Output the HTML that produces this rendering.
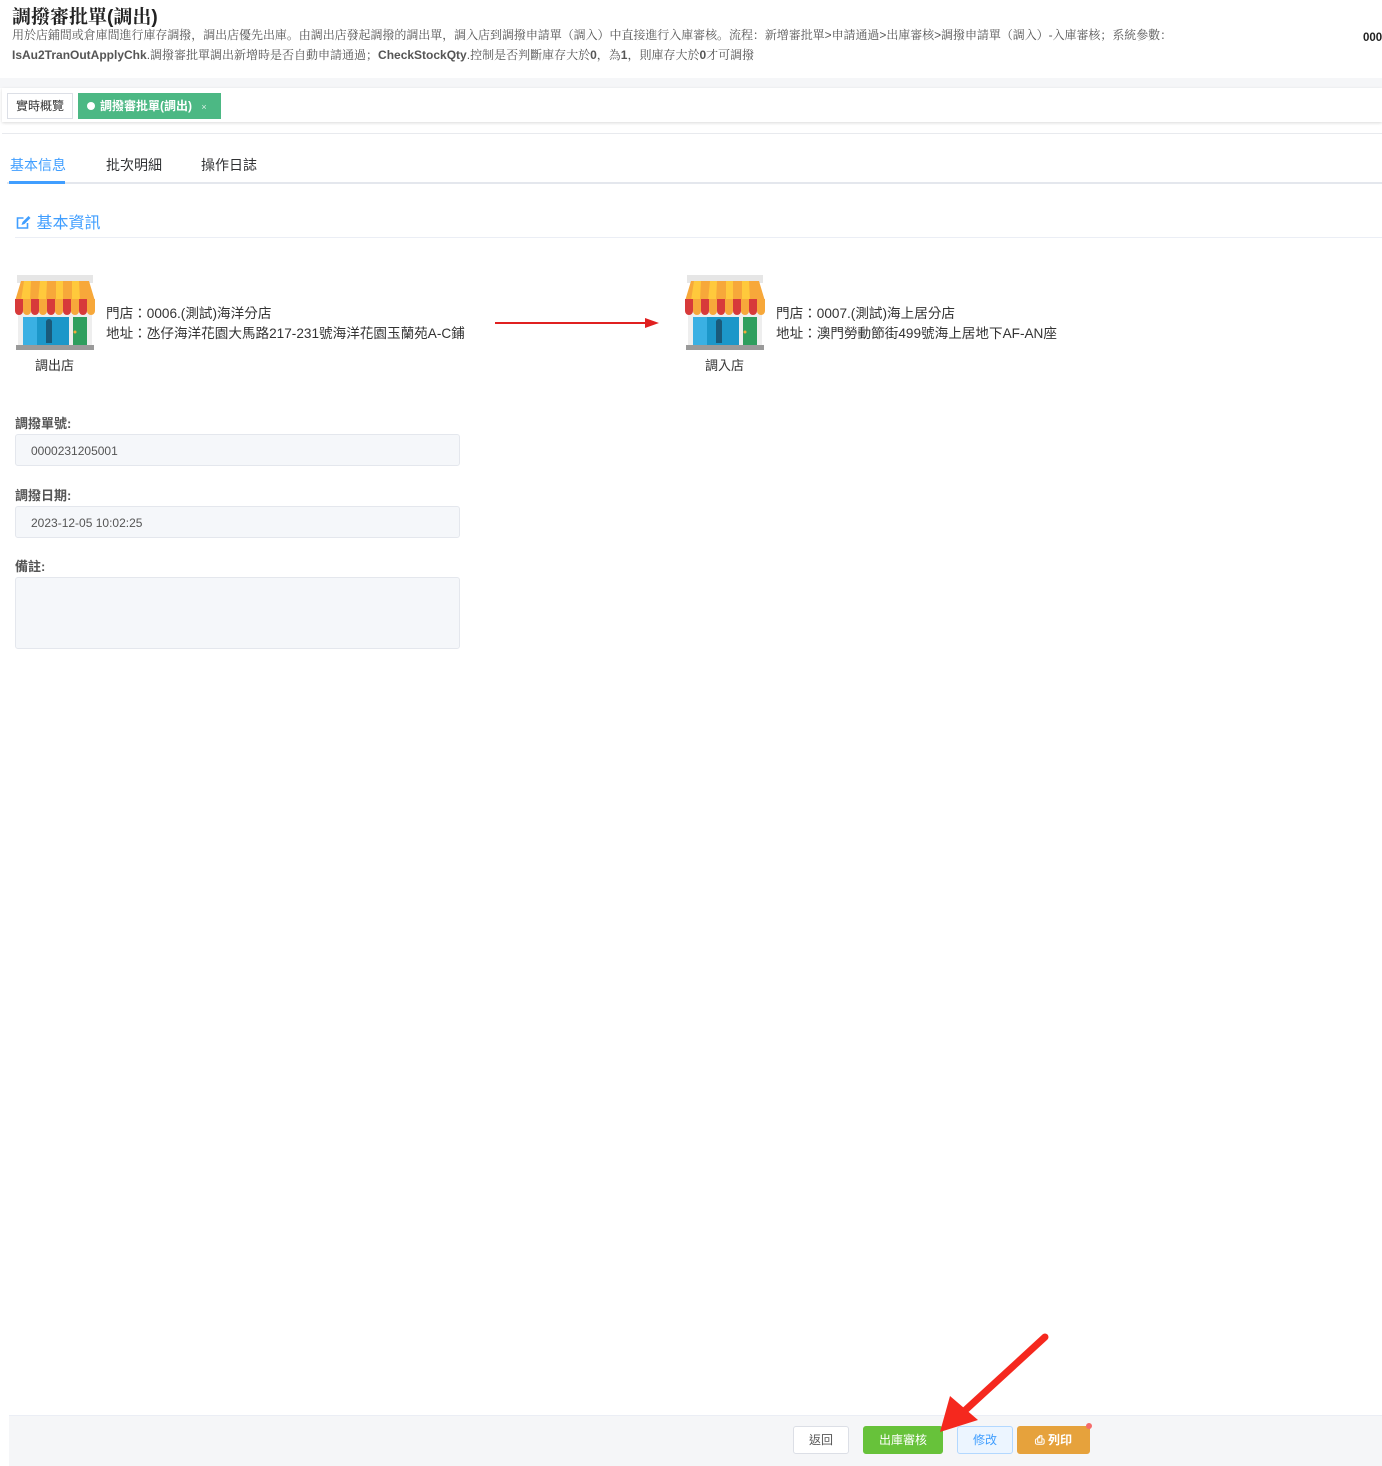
<!DOCTYPE html><html><head><meta charset="utf-8"><style>
*{margin:0;padding:0;box-sizing:border-box}
body{width:1382px;height:1466px;background:#fff;font-family:"Liberation Sans","Noto Sans CJK TC",sans-serif;color:#333;position:relative;overflow:hidden}
.a{position:absolute;white-space:nowrap}
.inp{position:absolute;left:15px;width:445px;height:32px;background:#f5f7fa;border:1px solid #e4e7ed;border-radius:3px;font-size:12px;color:#555;padding:9px 15px}
.btn{position:absolute;top:1426px;height:28px;font-size:12px;border-radius:3px;text-align:center;line-height:26px;border:1px solid}
</style></head><body>
<div class="a" style="left:12px;top:2px;font-size:19px;font-weight:bold;color:#222;font-family:'Liberation Sans','Noto Serif CJK SC',serif">調撥審批單(調出)</div>
<div class="a" style="left:12px;top:26px;font-size:12px;color:#555;font-family:'Liberation Sans','Noto Serif CJK SC',serif;letter-spacing:-0.05px">用於店鋪間或倉庫間進行庫存調撥，調出店優先出庫。由調出店發起調撥的調出單，調入店到調撥申請單（調入）中直接進行入庫審核。流程：新增審批單&gt;申請通過&gt;出庫審核&gt;調撥申請單（調入）-入庫審核；系統參數：</div>
<div class="a" style="left:12px;top:46px;font-size:12px;color:#555;font-family:'Liberation Sans','Noto Serif CJK SC',serif"><b>IsAu2TranOutApplyChk</b>.調撥審批單調出新增時是否自動申請通過；<b>CheckStockQty</b>.控制是否判斷庫存大於<b>0</b>，為<b>1</b>，則庫存大於<b>0</b>才可調撥</div>
<div class="a" style="left:1363px;top:32px;font-size:11.5px;font-weight:bold;color:#222">000</div>
<div class="a" style="left:0;top:78px;width:1382px;height:10px;background:#f5f6f8"></div>
<div class="a" style="left:2px;top:88px;width:1380px;height:34px;background:#fff;box-shadow:0 1px 3px rgba(0,0,0,.15)"></div>
<div class="a" style="left:2px;top:133px;width:1380px;height:1px;background:#e8eaee"></div>
<div class="a" style="left:7px;top:93px;width:66px;height:26px;border:1px solid #dcdfe6;font-size:12px;line-height:24px;text-align:center;color:#333;background:#fff">實時概覽</div>
<div class="a" style="left:78px;top:93px;width:143px;height:26px;background:#4cb884;color:#fff;font-size:12px;line-height:26px;padding-left:9px;font-weight:bold"><span style="display:inline-block;width:8px;height:8px;border-radius:50%;background:#fff;margin-right:5px"></span>調撥審批單(調出) <span style="font-size:9px;margin-left:6px;opacity:.8;font-weight:normal">×</span></div>
<div class="a" style="left:10px;top:155px;font-size:14px;color:#409eff">基本信息</div>
<div class="a" style="left:106px;top:155px;font-size:14px;color:#303133">批次明細</div>
<div class="a" style="left:201px;top:155px;font-size:14px;color:#303133">操作日誌</div>
<div class="a" style="left:7px;top:182px;width:1375px;height:2px;background:#e4e7ed"></div>
<div class="a" style="left:9px;top:181px;width:56px;height:3px;background:#409eff"></div>
<div class="a" style="left:15px;top:209px;font-size:16px;color:#409eff"><svg width="17" height="16" viewBox="0 0 16 16" style="vertical-align:-2px"><path d="M12 9v5H2V4h6" fill="none" stroke="#409eff" stroke-width="1.6"/><path d="M6 11l1-3 6-6 2 2-6 6z" fill="#409eff"/></svg> 基本資訊</div>
<div class="a" style="left:15px;top:237px;width:1367px;height:1px;background:#ebeef5"></div>
<svg class="a" style="left:15px;top:275px" width="80" height="77" viewBox="0 0 80 77">
<rect x="2" y="0" width="76" height="8" fill="#e6e6e6"/><rect x="3" y="20" width="74" height="52" fill="#eee"/>
<path d="M6 6h68l6 20H0z" fill="#f7a83a"/>
<path d="M9 6h7l-1 20h-9z M25 6h7l-1 20h-8z M41 6h7v20h-7z M57 6h7l1 20h-8z" fill="#ffc93c"/>
<path d="M0 24h8v12a4 4 0 0 1-8 0z M16 24h8v12a4 4 0 0 1-8 0z M32 24h8v12a4 4 0 0 1-8 0z M48 24h8v12a4 4 0 0 1-8 0z M64 24h8v12a4 4 0 0 1-8 0z" fill="#d73a3a"/>
<path d="M8 24h8v12a4 4 0 0 1-8 0z M24 24h8v12a4 4 0 0 1-8 0z M40 24h8v12a4 4 0 0 1-8 0z M56 24h8v12a4 4 0 0 1-8 0z M72 24h8v12a4 4 0 0 1-8 0z" fill="#f7a83a"/>
<rect x="8" y="42" width="46" height="28" fill="#3ab0e3"/><rect x="22" y="42" width="32" height="28" fill="#1c97c9"/>
<rect x="31" y="46" width="6" height="22" fill="#1a5a7a"/><circle cx="34" cy="47" r="3" fill="#1a5a7a"/>
<rect x="58" y="42" width="14" height="28" fill="#2f9e5e"/><circle cx="60" cy="57" r="1.5" fill="#f7a83a"/>
<rect x="1" y="70" width="78" height="5" fill="#9a9a9a"/></svg>
<div class="a" style="left:35px;top:355px;font-size:13px">調出店</div>
<div class="a" style="left:106px;top:304px;font-size:13.6px;line-height:20px">門店：0006.(測試)海洋分店<br>地址：氹仔海洋花園大馬路217-231號海洋花園玉蘭苑A-C鋪</div>
<div class="a" style="left:495px;top:322px;width:155px;height:1.5px;background:#e02020"></div>
<div class="a" style="left:645px;top:318px;width:0;height:0;border-left:14px solid #e02020;border-top:5px solid transparent;border-bottom:5px solid transparent"></div>
<svg class="a" style="left:685px;top:275px" width="80" height="77" viewBox="0 0 80 77">
<rect x="2" y="0" width="76" height="8" fill="#e6e6e6"/><rect x="3" y="20" width="74" height="52" fill="#eee"/>
<path d="M6 6h68l6 20H0z" fill="#f7a83a"/>
<path d="M9 6h7l-1 20h-9z M25 6h7l-1 20h-8z M41 6h7v20h-7z M57 6h7l1 20h-8z" fill="#ffc93c"/>
<path d="M0 24h8v12a4 4 0 0 1-8 0z M16 24h8v12a4 4 0 0 1-8 0z M32 24h8v12a4 4 0 0 1-8 0z M48 24h8v12a4 4 0 0 1-8 0z M64 24h8v12a4 4 0 0 1-8 0z" fill="#d73a3a"/>
<path d="M8 24h8v12a4 4 0 0 1-8 0z M24 24h8v12a4 4 0 0 1-8 0z M40 24h8v12a4 4 0 0 1-8 0z M56 24h8v12a4 4 0 0 1-8 0z M72 24h8v12a4 4 0 0 1-8 0z" fill="#f7a83a"/>
<rect x="8" y="42" width="46" height="28" fill="#3ab0e3"/><rect x="22" y="42" width="32" height="28" fill="#1c97c9"/>
<rect x="31" y="46" width="6" height="22" fill="#1a5a7a"/><circle cx="34" cy="47" r="3" fill="#1a5a7a"/>
<rect x="58" y="42" width="14" height="28" fill="#2f9e5e"/><circle cx="60" cy="57" r="1.5" fill="#f7a83a"/>
<rect x="1" y="70" width="78" height="5" fill="#9a9a9a"/></svg>
<div class="a" style="left:705px;top:355px;font-size:13px">調入店</div>
<div class="a" style="left:776px;top:304px;font-size:13.6px;line-height:20px">門店：0007.(測試)海上居分店<br>地址：澳門勞動節街499號海上居地下AF-AN座</div>
<div class="a" style="left:15px;top:413px;font-size:13px;font-weight:bold;color:#555">調撥單號:</div>
<div class="inp" style="top:434px">0000231205001</div>
<div class="a" style="left:15px;top:485px;font-size:13px;font-weight:bold;color:#555">調撥日期:</div>
<div class="inp" style="top:506px">2023-12-05 10:02:25</div>
<div class="a" style="left:15px;top:556px;font-size:13px;font-weight:bold;color:#555">備註:</div>
<div class="inp" style="top:577px;height:72px"></div>
<div class="a" style="left:9px;top:1415px;width:1373px;height:51px;background:#f5f6f8;border-top:1px solid #ebeef5"></div>
<div class="btn" style="left:793px;width:56px;background:#fff;border-color:#dcdfe6;color:#555">返回</div>
<div class="btn" style="left:863px;width:80px;background:#67c23a;border-color:#67c23a;color:#fff">出庫審核</div>
<div class="btn" style="left:957px;width:56px;background:#ecf5ff;border-color:#b3d8ff;color:#409eff">修改</div>
<div class="btn" style="left:1017px;width:73px;background:#e6a23c;border-color:#e6a23c;color:#fff;font-weight:bold">⎙ 列印</div>
<div class="a" style="left:1086px;top:1423px;width:6px;height:6px;border-radius:50%;background:#f56c6c"></div>
<svg class="a" style="left:930px;top:1330px" width="125" height="110" viewBox="0 0 125 110"><path d="M115 7L30 85" stroke="#f5281e" stroke-width="7" stroke-linecap="round"/><path d="M10 102L20 66L48 90z" fill="#f5281e"/></svg>
</body></html>
